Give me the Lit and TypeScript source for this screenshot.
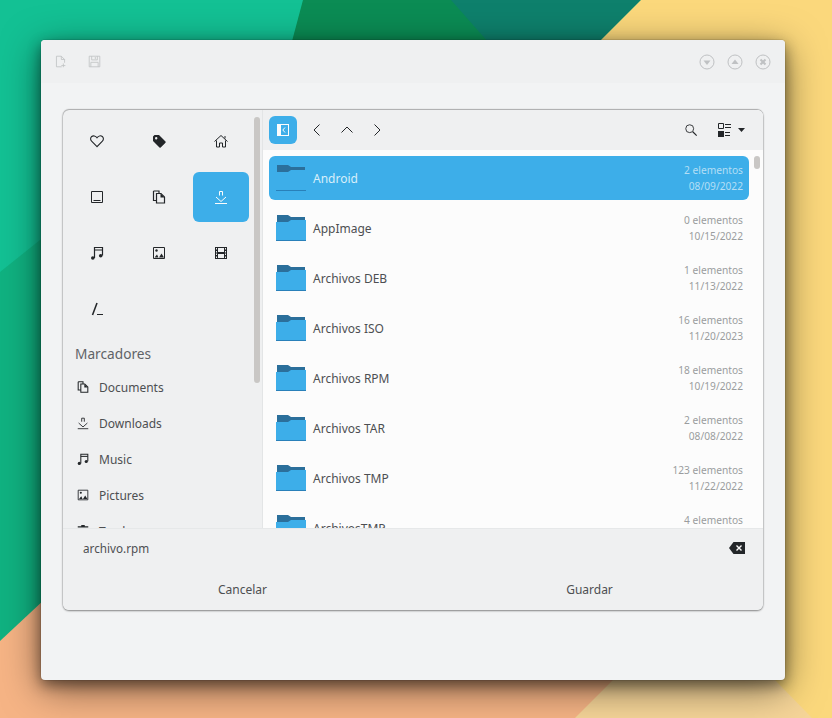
import { LitElement, html, css, svg } from "lit";
import { customElement } from "lit/decorators.js";

const ic = (size: number, body: unknown) => html`<svg class="ic" width=${size} height=${size} viewBox="0 0 16 16" fill="none" stroke="currentColor" stroke-width="1">${body}</svg>`;

const icons: Record<string, unknown> = {
  heart: svg`<path stroke-width="1.1" d="M8 13.6 2.6 8.2C1.2 6.700 1.300 4.600 2.700 3.500 4.100 2.500 6.500 2.700 8 4.800 9.500 2.700 11.900 2.500 13.300 3.500 14.700 4.600 14.800 6.700 13.400 8.200Z"/>`,
  tag: svg`<path fill="currentColor" stroke="none" fill-rule="evenodd" d="M2 3.500 3.500 2H8l6.500 6.500a1 1 0 0 1 0 1.200L9.700 14.500a1 1 0 0 1-1.200 0L2 8ZM5.200 4a1.200 1.200 0 1 0 0 2.400 1.200 1.200 0 0 0 0-2.400Z"/>`,
  home: svg`<path d="M1.500 8.500 8 2.500l6.500 6M3.500 7.500v6.500h3v-4h3v4h3V7.500M12 3v2.500"/>`,
  disk: svg`<path d="M2.500 2.500h11v11h-11z"/><path d="M4.500 11.500h7"/>`,
  docs: svg`<path stroke-width="1.2" d="M2.500 2h5.500v2.500M2.500 2v9.500h3"/><path stroke-width="1.2" d="M5.500 4.500H10l3.500 3.500v6h-8z" /><path fill="currentColor" stroke="none" d="M9.500 4.500 13.500 8.500H9.500z"/>`,
  down: svg`<path d="M2 14.500h12M6.500 2.500h3v4M6.500 2.500v4M3 8l5 4.500L13 8"/>`,
  music: svg`<path stroke-width="1.200" d="M5.500 13V2.500h8V10.500"/><path stroke-width="1.200" d="M5.500 5h8"/><circle cx="3.800" cy="13" r="1.800" fill="currentColor" stroke="none"/><circle cx="11.700" cy="10.800" r="1.800" fill="currentColor" stroke="none"/>`,
  pic: svg`<path d="M2.500 2.500h11v11h-11z"/><circle cx="5.500" cy="5.500" r="1.200" fill="currentColor" stroke="none"/><path fill="currentColor" stroke="none" d="M3.500 12.500 6 9.500l1.500 3zM8 12.500 10.500 8.500l2.500 4z"/>`,
  film: svg`<path fill="currentColor" stroke="none" fill-rule="evenodd" d="M2 2h12v12H2zM5 3v4h6V3zM5 9v4h6V9zM3 3v1.500h1V3zM12 3v1.500h1V3zM3 6v1.500h1V6zM12 6v1.500h1V6zM3 8.500V10h1V8.500zM12 8.500V10h1V8.500zM3 11.500V13h1v-1.500zM12 11.500V13h1v-1.500z"/>`,
  root: svg`<path stroke-width="1.600" d="M8 2 3.500 14"/><path d="M8 13.500h6"/>`,
  trash: svg`<path fill="currentColor" stroke="none" d="M6 1h4v1.500h4V4H2V2.500h4zM3 5h10l-1 10H4z"/>`,
  search: svg`<circle cx="6.500" cy="6.500" r="4.500"/><path stroke-width="1.300" d="m10 10 4.500 4.500"/>`,
};

interface Row { n: string; c: string; d: string; sel?: boolean }
const rows: Row[] = [
  { n: "Android", c: "2 elementos", d: "08/09/2022", sel: true },
  { n: "AppImage", c: "0 elementos", d: "10/15/2022" },
  { n: "Archivos DEB", c: "1 elementos", d: "11/13/2022" },
  { n: "Archivos ISO", c: "16 elementos", d: "11/20/2023" },
  { n: "Archivos RPM", c: "18 elementos", d: "10/19/2022" },
  { n: "Archivos TAR", c: "2 elementos", d: "08/08/2022" },
  { n: "Archivos TMP", c: "123 elementos", d: "11/22/2022" },
  { n: "ArchivosTMP", c: "4 elementos", d: "\u00a0" },
];

const places = ["heart", "tag", "home", "disk", "docs", "down", "music", "pic", "film", "root"];
const marks = [["docs", "Documents"], ["down", "Downloads"], ["music", "Music"], ["pic", "Pictures"], ["trash", "Trash"]];

const folder = html`<svg class="folder" width="30" height="26" viewBox="0 0 30 26">
  <path fill="#2b6f9b" d="M1 0h11l3 2h14v6H1z"/>
  <path fill="#3daee9" d="M0 7h12l3-2h15v21H0z"/>
  <path fill="#2980b9" d="M0 25h30v1H0z"/>
</svg>`;

@customElement("app-root")
export class AppRoot extends LitElement {
  static styles = css`
    :host { display: block; width: 832px; height: 718px; position: relative; overflow: hidden; font-family: "Noto Sans", sans-serif; color: #4d4f52; background: #13c194; }
    .wall { position: absolute; inset: 0; }
    .window { position: absolute; left: 41px; top: 40px; width: 744px; height: 640px; border-radius: 4px; background: #f2f3f4; box-shadow: 0 5px 14px rgba(0,0,0,.45), 0 9px 38px rgba(0,0,0,.5), 0 0 0 1px rgba(0,0,0,.08); display: flex; flex-direction: column; }
    .title { height: 43px; flex: none; box-sizing: border-box; background: #eff0f1; border-radius: 4px 4px 0 0; display: flex; align-items: center; padding: 0 14px 0 13px; color: #bfc1c3; }
    .title .tl { display: flex; gap: 21px; }
    .title .tr { margin-left: auto; display: flex; gap: 12px; }
    .body { flex: 1; padding: 27px 22px 70px; display: flex; min-height: 0; }
    .card { flex: 1; min-width: 0; border-radius: 6px; background: #eff0f1; box-shadow: 0 1px 2px rgba(0,0,0,.4), 0 -1px 1px rgba(0,0,0,.22), 0 0 2px rgba(0,0,0,.25); overflow: hidden; display: flex; flex-direction: column; }
    .main { height: 418px; flex: none; display: flex; min-height: 0; }
    .side { width: 199px; flex: none; position: relative; overflow: hidden; border-right: 1px solid #e3e5e6; }
    .grid { display: grid; grid-template-columns: repeat(3, 56px); grid-auto-rows: 50px; gap: 6px; padding: 6px 0 0 6px; color: #232629; }
    .cell { display: flex; align-items: center; justify-content: center; border-radius: 6px; }
    .cell.on { background: #3daee9; color: #fcfcfc; }
    .heading { font-size: 13.700px; line-height: 20px; margin: 10px 0 0 12px; color: #5f6367; }
    .marks { margin-top: 5px; }
    .mark { height: 36px; display: flex; align-items: center; padding-left: 13px; gap: 9px; font-size: 12px; color: #4d4f52; }
    .mark .ic { color: #232629; }
    .sb { position: absolute; left: 191px; top: 7px; width: 6px; height: 266px; border-radius: 3px; background: #c9c7c5; }
    .right { flex: 1; min-width: 0; display: flex; flex-direction: column; background: #fcfcfc; position: relative; }
    .tools { height: 40px; flex: none; background: #eff0f1; display: flex; align-items: center; padding: 0 18px 0 6px; color: #232629; }
    .toggle { width: 28px; height: 28px; border-radius: 6px; background: #3daee9; display: flex; align-items: center; justify-content: center; }
    .nav { display: flex; gap: 14px; margin-left: 12px; }
    .spacer { flex: 1; }
    .viewb { display: flex; align-items: center; gap: 6px; margin-left: 20px; }
    .list { flex: 1; min-height: 0; overflow: hidden; padding: 6px 14px 0 6px; display: flex; flex-direction: column; gap: 6px; position: relative; }
    .row { height: 44px; flex: none; display: flex; align-items: center; border-radius: 6px; padding: 0 6px 0 7px; }
    .row .folder { flex: none; margin-right: 7px; }
    .row .name { flex: 1; font-size: 12px; color: #4d4f52; }
    .row .meta { text-align: right; font-size: 10.200px; line-height: 16px; color: #9a9c9e; }
    .row.sel { background: #3daee9; }
    .row.sel .name { color: #d8eefa; }
    .row.sel .meta { color: #b4def5; }
    .lsb { position: absolute; left: 491px; top: 6px; width: 6px; height: 13px; border-radius: 3px; background: #c9c7c5; }
    .foot { flex: 1; background: #eff0f1; border-top: 1px solid #e6e8e9; display: flex; flex-direction: column; min-height: 0; }
    .name-row { height: 39px; flex: none; box-sizing: border-box; display: flex; align-items: center; padding: 0 18px 2px 20px; font-size: 11.700px; justify-content: space-between; }
    .btns { flex: 1; display: grid; grid-template-columns: 347px 347px; padding-left: 6px; align-items: center; font-size: 12px; text-align: center; }
  `;

  render() {
    return html`
      <svg class="wall" width="832" height="718" viewBox="0 0 832 718">
        <rect width="832" height="718" fill="#10b281"/>
        <path fill="#13c194" d="M0 0h320v100L40 240 0 272Z"/>
        <path fill="#0b8c54" d="M303 0h220v60H287Z"/>
        <path fill="#0e806c" d="M451 0h190l-60 60H504Z"/>
        <path fill="#fbd87c" d="M641 0h191v718H590V60L581 60Z"/>
        <path fill="#f6b485" d="M0 641 60 585V718H0Z"/>
        <path fill="#f6b485" d="M50 660h600v58H50Z"/>
        <path fill="#f6d598" d="M575 718 613 680V670H775V680L812 718Z"/>
      </svg>
      <div class="window">
        <div class="title">
          <div class="tl">
            ${ic(13, svg`<path d="M3 1.500h6l4 4v4M9 1.500v4h4M3 1.500v13h6.500M11.500 10.500v4.500M9 13h5"/>`)}
            ${ic(13, svg`<path d="M1.500 1.500h13v13h-13zM4.500 1.500v4.500h7V1.500M3.500 14.500V9h9v5.500M9 2.500V5"/>`)}
          </div>
          <div class="tr">
            ${ic(16, svg`<circle cx="8" cy="8" r="7"/><path fill="currentColor" stroke="none" d="M4.500 6.500h7L8 11Z"/>`)}
            ${ic(16, svg`<circle cx="8" cy="8" r="7"/><path fill="currentColor" stroke="none" d="M4.500 10h7L8 5.500Z"/>`)}
            ${ic(16, svg`<circle cx="8" cy="8" r="7"/><path stroke-width="2" d="m5.500 5.500 5 5m0-5-5 5"/>`)}
          </div>
        </div>
        <div class="body">
          <div class="card">
            <div class="main">
              <div class="side">
                <div class="grid">
                  ${places.map((p) => html`<div class="cell ${p === "down" ? "on" : ""}">${ic(16, icons[p])}</div>`)}
                </div>
                <div class="heading">Marcadores</div>
                <div class="marks">
                  ${marks.map(([i, t]) => html`<div class="mark">${ic(14, icons[i])}<span>${t}</span></div>`)}
                </div>
                <div class="sb"></div>
              </div>
              <div class="right">
                <div class="tools">
                  <div class="toggle">
                    <svg width="12" height="12" viewBox="0 0 12 12"><path fill="#fcfcfc" d="M0 0h12v12H0z"/><path fill="#3daee9" d="M4 1h7v10H4z"/><path fill="none" stroke="#fcfcfc" d="M8 3.500 5.800 6 8 8.500"/></svg>
                  </div>
                  <div class="nav">
                    ${ic(16, svg`<path d="M10.500 2.500 5 8l5.500 5.500"/>`)}
                    ${ic(16, svg`<path d="M2.500 10.500 8 5l5.500 5.500"/>`)}
                    ${ic(16, svg`<path d="M5.500 2.500 11 8l-5.500 5.500"/>`)}
                  </div>
                  <div class="spacer"></div>
                  ${ic(14, icons.search)}
                  <div class="viewb">
                    <svg width="14" height="14" viewBox="0 0 14 14" fill="none" stroke="currentColor"><path d="M.5.5h5v5h-5z"/><path fill="currentColor" stroke="none" d="M0 8h6v6H0z"/><path d="M7 1.500h6M7 4.500h6M7 9.500h5M7 12.500h5"/></svg>
                    <svg width="7" height="4" viewBox="0 0 7 4"><path fill="currentColor" d="M0 0h7L3.500 4Z"/></svg>
                  </div>
                </div>
                <div class="list">
                  ${rows.map((r) => html`<div class="row ${r.sel ? "sel" : ""}">
                    ${folder}
                    <div class="name">${r.n}</div>
                    <div class="meta">${r.c}<br />${r.d}</div>
                  </div>`)}
                  <div class="lsb"></div>
                </div>
              </div>
            </div>
            <div class="foot">
              <div class="name-row">
                <span>archivo.rpm</span>
                <svg width="16" height="12" viewBox="0 0 16 12"><path fill="#232629" d="M0 6 4.500 0H16v12H4.500Z"/><path stroke="#fcfcfc" stroke-width="1.400" d="m7.500 3.500 5 5m0-5-5 5"/></svg>
              </div>
              <div class="btns"><span>Cancelar</span><span>Guardar</span></div>
            </div>
          </div>
        </div>
      </div>
    `;
  }
}
